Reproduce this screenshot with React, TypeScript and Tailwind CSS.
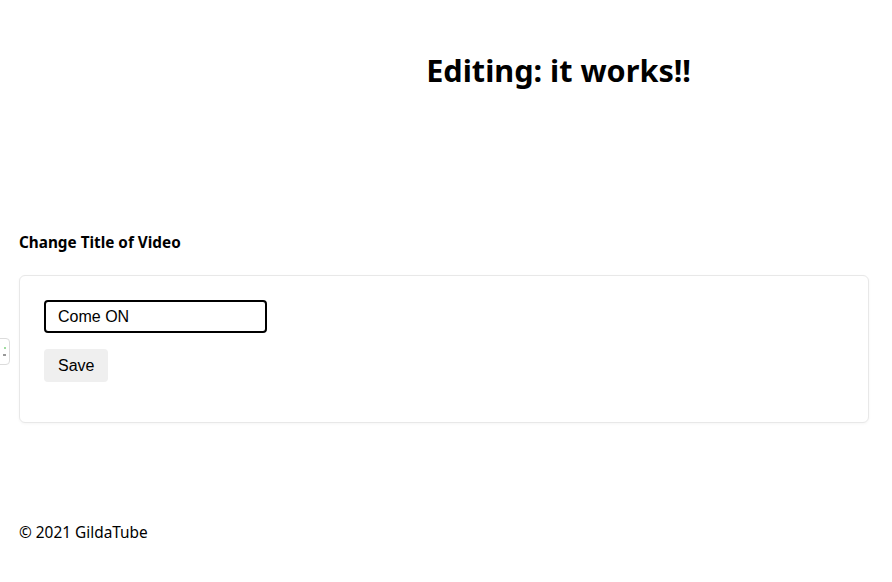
export default function App() {
  return (
    <div className="relative min-h-screen w-full bg-white text-black" style={{ fontFamily: '"Noto Sans", "Open Sans", sans-serif' }}>
      {/* Header */}
      <div className="flex justify-end pt-[48px] pr-[201px]">
        <h1 className="text-[30.6px] font-bold leading-[44px]">Editing: it works!!</h1>
      </div>

      {/* Form */}
      <div className="mt-[140px] px-[19px]">
        <h2 className="text-[15.3px] font-bold leading-[20px]">Change Title of Video</h2>
        <div className="mt-[23px] w-[850px] rounded-md border border-[#e8e8e8] bg-white px-[24px] pt-[24px] pb-[40px] shadow-[0_1px_3px_rgba(0,0,0,0.04)]">
          <input
            defaultValue="Come ON"
            className="block h-[33px] w-[223px] rounded-[4px] border-2 border-black px-[12px] text-[16px] text-black outline-none"
            style={{ fontFamily: '"Liberation Sans", Arial, sans-serif' }}
          />
          <button
            className="mt-[16px] block h-[33px] rounded-[4px] bg-[#efefef] px-[14px] text-[16px] text-black"
            style={{ fontFamily: '"Liberation Sans", Arial, sans-serif' }}
          >
            Save
          </button>
        </div>
      </div>

      {/* Footer */}
      <div className="mt-[100px] px-[19px] text-[15.4px] leading-[20px]">© 2021 GildaTube</div>

      {/* Little widget cut off at the left edge */}
      <div className="absolute left-[-20px] top-[338px] flex h-[27px] w-[30px] flex-col items-end justify-center gap-[5px] rounded-[4px] border border-[#dcdcdc] bg-white pr-[3px]">
        <span className="h-[2px] w-[2px] rounded-full bg-[#7fd07f]" />
        <span className="h-[2px] w-[3px] bg-[#999]" />
      </div>
    </div>
  );
}
